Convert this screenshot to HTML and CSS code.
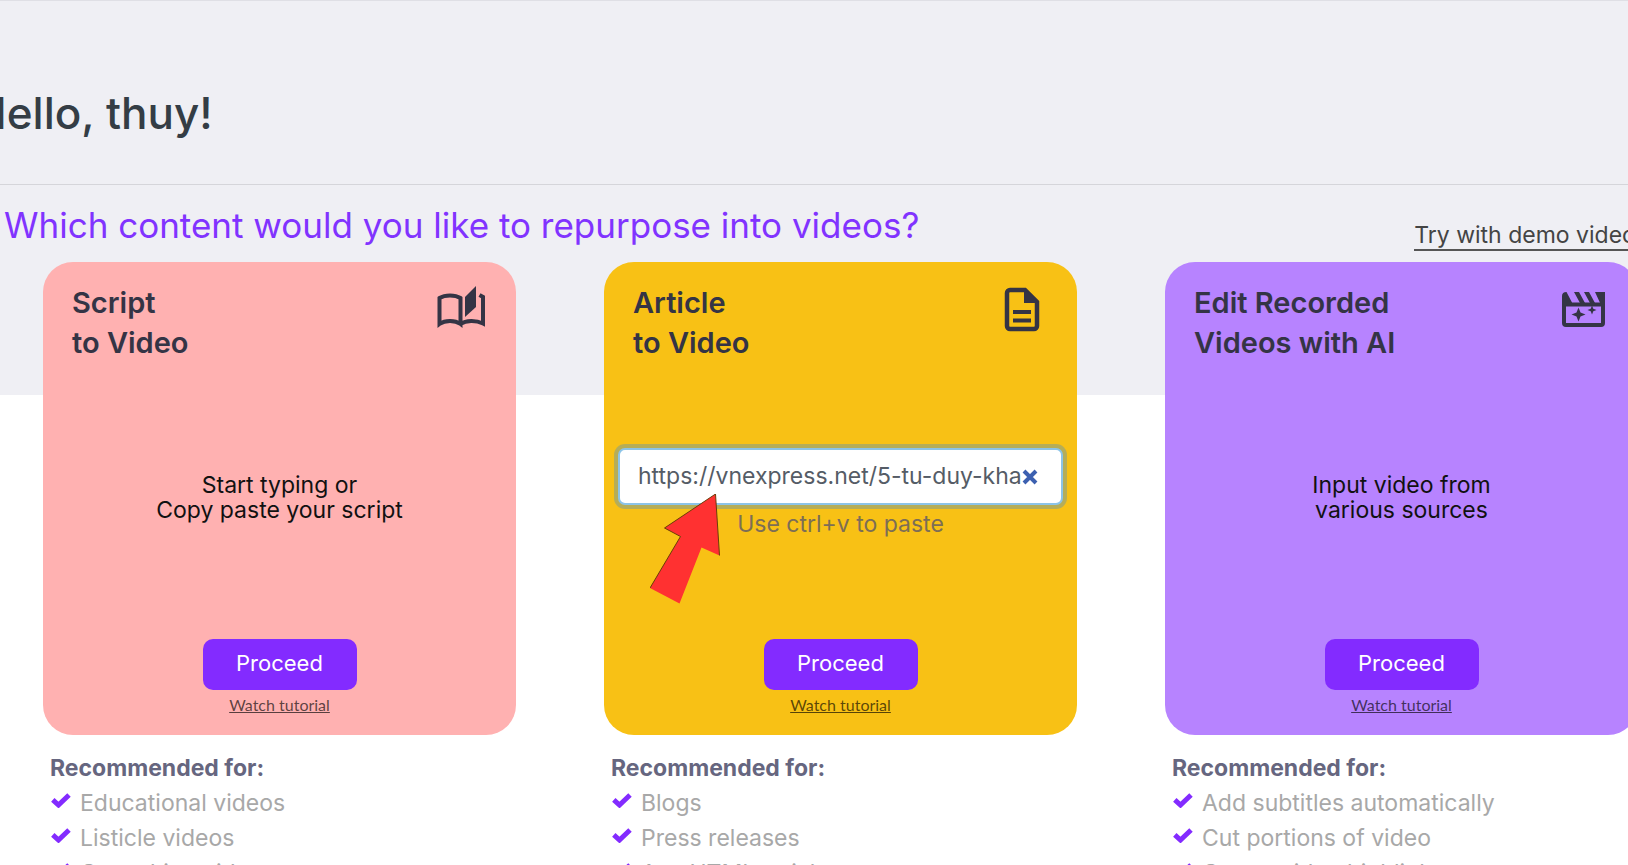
FILE: index.html
```html
<!DOCTYPE html>
<html lang="en">
<head>
<meta charset="utf-8">
<title>Create a video</title>
<link rel="stylesheet" href="styles.css">
</head>
<body>
<svg class="sprite" aria-hidden="true">
  <symbol id="check" viewBox="0 0 20 15"><path d="M1.800 6.800 7.500 12 18 2" fill="none" stroke="currentColor" stroke-width="5"/></symbol>
</svg>
<header class="greeting"><h1>Hello, thuy!</h1></header>
<main>
  <div class="intro">
    <h2>Which content would you like to repurpose into videos?</h2>
    <a class="demo" href="#demo">Try with demo videos</a>
  </div>
  <div class="options">
    <section class="option">
      <div class="card card-script">
        <div class="card-head">
          <h3>Script<br>to Video</h3>
          <svg class="icon" viewBox="0 0 48 48" aria-hidden="true"><path d="M2.500 13C8 9.500 18 9.500 23.500 13V39C18 35 8 35 2.500 39ZM23.500 39C29 35 39 35 46 38.500V12L42.500 10" fill="none" stroke="currentColor" stroke-width="4"/><path d="M28 12 39 1V22L28 32Z" fill="currentColor"/></svg>
        </div>
        <div class="card-body"><p>Start typing or<br>Copy paste your script</p></div>
        <div class="card-foot"><button class="proceed" type="button">Proceed</button><a href="#script-tutorial">Watch tutorial</a></div>
      </div>
      <h4>Recommended for:</h4>
      <ul>
        <li><svg class="check"><use href="#check"/></svg>Educational videos</li>
        <li><svg class="check"><use href="#check"/></svg>Listicle videos</li>
        <li><svg class="check"><use href="#check"/></svg>Consulting videos</li>
      </ul>
    </section>
    <section class="option">
      <div class="card card-article">
        <div class="card-head">
          <h3>Article<br>to Video</h3>
          <svg class="icon" viewBox="0 0 48 48" aria-hidden="true"><path d="M27 5H12a3 3 0 0 0-3 3V41a3 3 0 0 0 3 3H36a3 3 0 0 0 3-3V17Z" fill="none" stroke="currentColor" stroke-width="4.500"/><path d="M26 4V18H40ZM15 25H33V29H15ZM15 33.500H33V37.500H15Z" fill="currentColor"/></svg>
        </div>
        <div class="card-body">
          <div class="url-box">
            <input type="text" aria-label="Article link" value="https://vnexpress.net/5-tu-duy-khac-biet">
            <button type="button" aria-label="Clear"><svg viewBox="0 0 16 16"><path d="M2 2 14 14M14 2 2 14" stroke="currentColor" stroke-width="4"/></svg></button>
          </div>
          <p class="hint">Use ctrl+v to paste</p>
          <svg class="pointer" viewBox="0 0 70 110" aria-hidden="true"><path d="M65.500 0 69.500 61.500 51.500 53.500 29.500 109.500 0 94 30.500 42.500 14.500 34Z" fill="#ff3131"/><path d="M0 94 30.500 42.500 14.500 34 65.500 0 69.500 61.500" fill="none" stroke="#6b3d08" stroke-width="1"/></svg>
        </div>
        <div class="card-foot"><button class="proceed" type="button">Proceed</button><a href="#article-tutorial">Watch tutorial</a></div>
      </div>
      <h4>Recommended for:</h4>
      <ul>
        <li><svg class="check"><use href="#check"/></svg>Blogs</li>
        <li><svg class="check"><use href="#check"/></svg>Press releases</li>
        <li><svg class="check"><use href="#check"/></svg>Any HTML article</li>
      </ul>
    </section>
    <section class="option">
      <div class="card card-edit">
        <div class="card-head">
          <h3>Edit Recorded<br>Videos with AI</h3>
          <svg class="icon" viewBox="0 0 48 48" aria-hidden="true"><path d="M5 12V38a2 2 0 0 0 2 2H42a2 2 0 0 0 2-2V10M5 19.500H44" fill="none" stroke="currentColor" stroke-width="4"/><path d="M3 11Q3 7 7.500 7L13 17.500V21H3ZM15 7H20L26 18H21ZM25 7H30L36 18H31ZM36 7H46V20H42ZM19.500 22.500 21.500 27.500 26.500 29.500 21.500 31.500 19.500 36.500 17.500 31.500 12.500 29.500 17.500 27.500ZM33 20.500 34.300 23.700 37.500 25 34.300 26.300 33 29.500 31.700 26.300 28.500 25 31.700 23.700Z" fill="currentColor"/></svg>
        </div>
        <div class="card-body"><p>Input video from<br>various sources</p></div>
        <div class="card-foot"><button class="proceed" type="button">Proceed</button><a href="#edit-tutorial">Watch tutorial</a></div>
      </div>
      <h4>Recommended for:</h4>
      <ul>
        <li><svg class="check"><use href="#check"/></svg>Add subtitles automatically</li>
        <li><svg class="check"><use href="#check"/></svg>Cut portions of video</li>
        <li><svg class="check"><use href="#check"/></svg>Create video highlights</li>
      </ul>
    </section>
  </div>
</main>
</body>
</html>
```
FILE: styles.css
```css
* { box-sizing: border-box; }
body {
  margin: 0;
  height: 100vh;
  overflow: hidden;
  font-family: Inter, "Liberation Sans", sans-serif;
  font-size: 23px;
  background: linear-gradient(#efeff4 395px, #fff 395px);
}
h1, h2, h3, h4, p, ul { margin: 0; padding: 0; }
.sprite { display: none; }
.greeting {
  margin-left: -26px;
  padding: 86px 0 45px;
  border-top: 1px solid #dfdfe5;
  border-bottom: 1px solid #d5d5da;
}
h1 { font-size: 44px; line-height: 52px; font-weight: 500; color: #343d45; }
.intro {
  display: flex;
  justify-content: space-between;
  margin-right: -20px;
  padding: 18px 0 0 4px;
  height: 77px;
  white-space: nowrap;
}
h2 { font-size: 35px; line-height: 44px; font-weight: 400; color: #8133ff; }
.demo {
  align-self: flex-start;
  margin-top: 18px;
  line-height: 28px;
  color: #444;
  text-decoration: none;
  border-bottom: 2px solid #555;
}
.options {
  display: grid;
  grid-template-columns: repeat(3, minmax(0, 1fr));
  gap: 88px;
  margin: 0 -10px 0 43px;
}
.card {
  aspect-ratio: 1;
  display: flex;
  flex-direction: column;
  padding: 21px 10px 0;
  border-radius: 30px;
}
.card-script { background: #ffb1b1; }
.card-article { background: #f8c115; }
.card-edit { background: #b783ff; }
.card-head {
  display: flex;
  justify-content: space-between;
  padding: 0 21px 0 19px;
  color: #343445;
}
h3 { font-size: 29px; line-height: 40px; font-weight: 600; }
.icon { width: 48px; height: 48px; margin-top: 2px; }
.card-body {
  position: relative;
  flex: 1;
  padding-top: 110px;
  line-height: 25px;
  text-align: center;
  color: #111;
}
.card-article .card-body { padding-top: 85px; }
.url-box {
  display: flex;
  align-items: center;
  margin: 0 4px;
  height: 57px;
  padding: 0 23px 0 18px;
  border: 2px solid #8cc4e8;
  border-radius: 7px;
  background: #fff;
  box-shadow: 0 0 0 4px #b5ad58;
}
.url-box input {
  flex: 1;
  min-width: 0;
  padding: 0;
  border: 0;
  outline: 0;
  background: none;
  font: inherit;
  color: #555c66;
}
.url-box button {
  display: flex;
  padding: 0;
  border: 0;
  background: none;
  color: #3c60b0;
}
.url-box svg { width: 16px; height: 16px; }
.hint { padding-top: 7px; color: #7d6e55; }
.pointer {
  position: absolute;
  left: 36px;
  top: 131px;
  width: 70px;
  height: 110px;
}
.card-foot {
  display: flex;
  flex-direction: column;
  align-items: center;
  padding-bottom: 19px;
}
.proceed {
  width: 154px;
  height: 51px;
  padding: 0 0 4px;
  border: 0;
  border-radius: 10px;
  background: #832bff;
  color: #fff;
  font: 400 22px Inter, sans-serif;
}
.card-foot a {
  margin-top: 4px;
  font: 16px/22px Lato, sans-serif;
  color: rgba(0, 0, 0, .65);
}
h4 {
  padding: 15px 0 0 7px;
  font-size: 23px;
  line-height: 36px;
  font-weight: 700;
  color: #66667f;
}
ul { list-style: none; padding-left: 8px; line-height: 35px; color: #a8a8a8; }
li { display: flex; gap: 9px; white-space: nowrap; }
.check { width: 20px; height: 15px; margin-top: 7px; color: #832bff; }
```
